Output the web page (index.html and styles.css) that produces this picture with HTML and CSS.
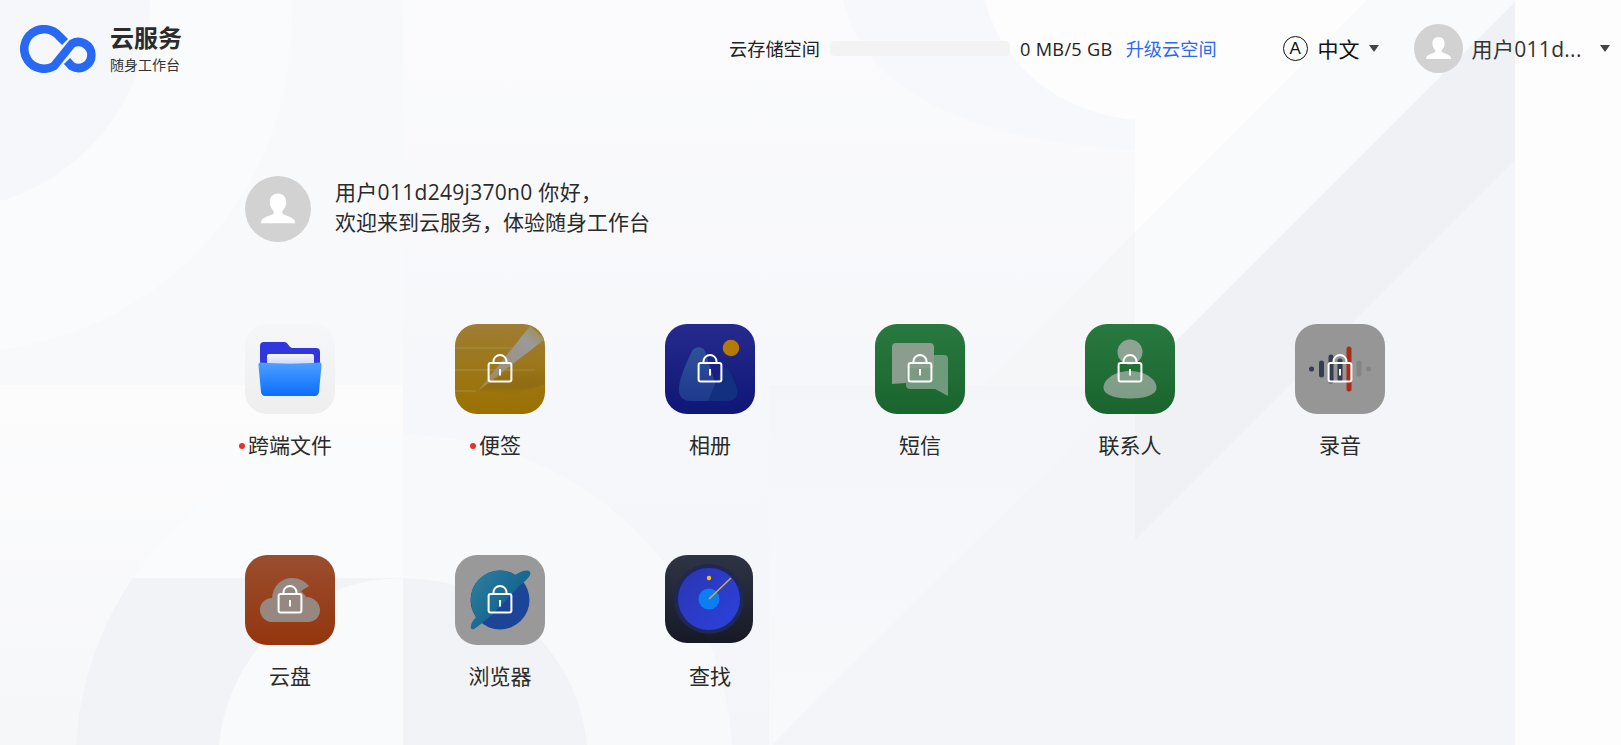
FILE: index.html
```html
<!DOCTYPE html>
<html lang="zh-CN">
<head>
<meta charset="utf-8">
<title>云服务</title>
<link rel="stylesheet" href="styles.css">
</head>
<body>
<svg class="decor" width="1621" height="745" viewBox="0 0 1621 745" aria-hidden="true">
  <defs>
    <clipPath id="col1"><rect width="403" height="745"/></clipPath>
    <clipPath id="col2"><rect x="403" width="732" height="745"/></clipPath>
    <clipPath id="col4"><rect x="1135" width="380" height="745"/></clipPath>
    <clipPath id="lowBox"><rect x="769" y="386" width="746" height="359"/></clipPath>
    <clipPath id="bigRound"><circle cx="404" cy="763.500" r="328.500"/></clipPath>
    <linearGradient id="leftLow" x1="0" y1="0" x2="0" y2="1"><stop offset="0" stop-color="#fcfcfd"/><stop offset="1" stop-color="#f6f7f9"/></linearGradient>
    <linearGradient id="midBase" x1="0" y1="0" x2="0" y2="1"><stop offset="0" stop-color="#fbfbfd"/><stop offset=".55" stop-color="#f6f7fa"/><stop offset="1" stop-color="#f3f5f8"/></linearGradient>
    <linearGradient id="lowTri" x1="0" y1="0" x2="0" y2="1"><stop offset="0" stop-color="#f3f5f8"/><stop offset=".4" stop-color="#f6f7fa"/><stop offset="1" stop-color="#f8f9fb"/></linearGradient>
  </defs>
  <rect width="1621" height="745" fill="#fdfdfd"/>
  <g clip-path="url(#col1)">
    <rect width="403" height="745" fill="#f8f9fb"/>
    <circle cx="-40" cy="20" r="332" fill="#fafbfc"/>
    <circle cx="-60" cy="0" r="210" fill="#f6f7fa"/>
    <rect y="385" width="403" height="360" fill="url(#leftLow)"/>
    <circle cx="404" cy="763.500" r="328.500" fill="#fafbfc"/>
    <rect y="578" width="403" height="167" fill="#f1f3f6" clip-path="url(#bigRound)"/>
    <circle cx="403" cy="763" r="185" fill="#f9fafb"/>
  </g>
  <g clip-path="url(#col2)">
    <rect x="403" width="732" height="745" fill="url(#midBase)"/>
    <path d="M843 0C860 80 950 140 1135 150V0z" fill="#f7f8fb"/>
    <path d="M985 0C1000 60 1050 110 1135 120V0z" fill="#fdfdfe"/>
    <polygon points="1135,232 1135,386 981,386" fill="#f5f6f8"/>
    <circle cx="404" cy="763.500" r="328.500" fill="#f8f9fb"/>
    <circle cx="403" cy="763" r="185" fill="#f1f3f6"/>
  </g>
  <g clip-path="url(#col4)">
    <rect x="1135" width="380" height="745" fill="#fdfdfd"/>
    <polygon points="1367,0 1515,0 1515,745 622,745" fill="#f9fafb"/>
    <polygon points="1517,0 1515,0 1515,745 772,745" fill="#eff1f4"/>
    <polygon points="1515,160 1515,745 930,745" fill="#f4f5f8"/>
  </g>
  <g clip-path="url(#lowBox)">
    <rect x="769" y="386" width="366" height="359" fill="url(#lowTri)"/>
    <polygon points="1131,386 1135,386 1135,745 772,745" fill="#f3f5f8"/>
  </g>
</svg>

<svg class="defs" width="0" height="0" aria-hidden="true">
  <symbol id="lock" viewBox="0 0 28 32">
    <path d="M7.500 11V9.500a6.500 6.500 0 0 1 13 0V11" fill="none" stroke="#fff" stroke-width="2"/>
    <rect x="2.600" y="11" width="22.800" height="18.500" rx="2" fill="none" stroke="#fff" stroke-width="2"/>
    <rect x="13" y="17" width="2" height="6.500" fill="#fff"/>
  </symbol>
  <symbol id="person" viewBox="0 0 64 64">
    <path d="M32 17c-5.200 0-8 3.800-8 8.500 0 3.500 1.500 6.500 3.800 8.400v2.600c-3.500 1.800-8.800 3-11 5.500-.9 1-1.300 2.300-1.300 3.800h33c0-1.500-.4-2.800-1.300-3.800-2.200-2.500-7.500-3.700-11-5.500v-2.600c2.300-1.900 3.800-4.900 3.800-8.400 0-4.700-2.800-8.500-8-8.500z" fill="#fff"/>
  </symbol>
</svg>

<header class="topbar">
  <div class="brand">
    <svg class="brand-logo" width="76" height="48" viewBox="20 25 76 48">
      <path d="M65 42L59 36A19.800 19.800 0 1 0 53.900 66.100L72 43.700A13 13 0 1 1 72 66.300L67 61" fill="none" stroke="#2768f5" stroke-width="8.500"/>
    </svg>
    <div class="brand-text">
      <div class="brand-name">云服务</div>
      <div class="brand-sub">随身工作台</div>
    </div>
  </div>
  <div class="storage">
    <span>云存储空间</span>
    <div class="storage-bar"></div>
    <span class="storage-num">0 MB/5 GB</span>
    <a class="storage-up">升级云空间</a>
  </div>
  <div class="lang">
    <span class="lang-a">A</span>
    <span class="lang-name">中文</span>
    <span class="caret"></span>
  </div>
  <div class="account">
    <div class="avatar avatar-small"><svg width="49" height="49"><use href="#person"/></svg></div>
    <span class="account-name">用户011d...</span>
    <span class="caret caret-account"></span>
  </div>
</header>

<main class="main">
  <section class="greeting">
    <div class="avatar avatar-big"><svg width="66" height="66"><use href="#person"/></svg></div>
    <p class="greeting-text"><span class="greeting-name">用户011d249j370n0 你好，</span><br>欢迎来到云服务，体验随身工作台</p>
  </section>

  <section class="apps">
    <div class="app">
      <div class="app-icon">
        <svg width="90" height="90" viewBox="0 0 90 90">
          <defs>
            <linearGradient id="fBg" x1="0" y1="0" x2="0" y2="1"><stop offset="0" stop-color="#f6f7f9"/><stop offset="1" stop-color="#eeeeee"/></linearGradient>
            <linearGradient id="fFront" x1="0" y1="0" x2="0" y2="1"><stop offset="0" stop-color="#4f9fff"/><stop offset="1" stop-color="#0b6dfd"/></linearGradient>
            <linearGradient id="fPaper" x1="0" y1="0" x2="0" y2="1"><stop offset="0" stop-color="#f4f6fd"/><stop offset="1" stop-color="#c9d4f7"/></linearGradient>
          </defs>
          <rect width="90" height="90" rx="22" fill="url(#fBg)"/>
          <path d="M15 42V22a4 4 0 0 1 4-4h20c5 0 4 6 9 6h23a4 4 0 0 1 4 4v14z" fill="#2f37dd"/>
          <rect x="22" y="30" width="47" height="12" rx="2" fill="url(#fPaper)"/>
          <path d="M13.500 41c-.3-1.500.8-2.700 2-2.500 19 1.500 40 1.500 59 0 1.200-.2 2.300 1 2 2.500l-2.500 27c-.2 2.300-1.800 4-4 4H20c-2.200 0-3.800-1.700-4-4z" fill="url(#fFront)"/>
        </svg>
      </div>
      <div class="app-label has-dot">跨端文件</div>
    </div>

    <div class="app">
      <div class="app-icon">
        <svg width="90" height="90" viewBox="0 0 90 90">
          <defs>
            <clipPath id="nClip"><rect width="90" height="90" rx="22"/></clipPath>
            <linearGradient id="nBg" x1="0" y1="0" x2="0" y2="1"><stop offset="0" stop-color="#9f7d33"/><stop offset="1" stop-color="#9a7100"/></linearGradient>
            <linearGradient id="nPen" x1="23" y1="67" x2="82" y2="8" gradientUnits="userSpaceOnUse"><stop offset="0" stop-color="#a08a4a"/><stop offset=".45" stop-color="#9a9284"/><stop offset=".85" stop-color="#9a9a9a"/><stop offset="1" stop-color="#a0915f"/></linearGradient>
            <linearGradient id="nShade" x1="0" y1="40" x2="0" y2="72" gradientUnits="userSpaceOnUse"><stop offset="0" stop-color="#7f6215" stop-opacity="0"/><stop offset=".7" stop-color="#7f6215" stop-opacity=".45"/><stop offset="1" stop-color="#9a7100" stop-opacity="0"/></linearGradient>
          </defs>
          <g clip-path="url(#nClip)">
            <rect width="90" height="90" fill="url(#nBg)"/>
            <path d="M0 24H60M0 46H80M0 67H21" stroke="#ad9858" stroke-width="1" opacity=".75"/>
            <path d="M23 67L90 22V60L60 70z" fill="url(#nShade)"/>
            <path d="M23 67L75 2L90 15z" fill="url(#nPen)"/>
          </g>
        </svg>
        <svg class="lock" width="28" height="32"><use href="#lock"/></svg>
      </div>
      <div class="app-label has-dot">便签</div>
    </div>

    <div class="app">
      <div class="app-icon">
        <svg width="90" height="90" viewBox="0 0 90 90">
          <defs>
            <linearGradient id="pBg" x1="0" y1="0" x2="0" y2="1"><stop offset="0" stop-color="#262a8e"/><stop offset="1" stop-color="#0e1676"/></linearGradient>
            <linearGradient id="pM1" x1="0" y1="0" x2="0" y2="1"><stop offset="0" stop-color="#30509b"/><stop offset="1" stop-color="#1d3a8c"/></linearGradient>
          </defs>
          <rect width="90" height="90" rx="22" fill="url(#pBg)"/>
          <path d="M27 27c3-5 10-5 13 0L56 77H26c-9 0-13-6-12-14 1-11 8-25 13-36z" fill="url(#pM1)"/>
          <path d="M56 46c4-4 8-2 10 4l6 14c2 8-2 13-10 13H43z" fill="#12307f"/>
          <circle cx="66" cy="24" r="8.300" fill="#b57a05"/>
        </svg>
        <svg class="lock" width="28" height="32"><use href="#lock"/></svg>
      </div>
      <div class="app-label">相册</div>
    </div>

    <div class="app">
      <div class="app-icon">
        <svg width="90" height="90" viewBox="0 0 90 90">
          <defs>
            <linearGradient id="sBg" x1="0" y1="0" x2="0" y2="1"><stop offset="0" stop-color="#28793f"/><stop offset="1" stop-color="#1a642e"/></linearGradient>
          </defs>
          <rect width="90" height="90" rx="22" fill="url(#sBg)"/>
          <path d="M17 23a4 4 0 0 1 4-4h34a4 4 0 0 1 4 4v32a4 4 0 0 1-4 4H30L17 60z" fill="#8b9d8f"/>
          <path d="M59 31h10a4 4 0 0 1 4 4v37L60 65H35a4 4 0 0 1-4-4v-2h24a4 4 0 0 0 4-4z" fill="#6f9a7b"/>
          <path d="M31 59h24a4 4 0 0 0 4-4V44H31z" fill="#7a9a81"/>
        </svg>
        <svg class="lock" width="28" height="32"><use href="#lock"/></svg>
      </div>
      <div class="app-label">短信</div>
    </div>

    <div class="app">
      <div class="app-icon">
        <svg width="90" height="90" viewBox="0 0 90 90">
          <defs>
            <linearGradient id="cBg" x1="0" y1="0" x2="0" y2="1"><stop offset="0" stop-color="#28793f"/><stop offset="1" stop-color="#1a642e"/></linearGradient>
            <linearGradient id="cBody" x1="0" y1="0" x2="0" y2="1"><stop offset="0" stop-color="#86a08c"/><stop offset="1" stop-color="#7d9c85"/></linearGradient>
          </defs>
          <rect width="90" height="90" rx="22" fill="url(#cBg)"/>
          <circle cx="45" cy="28" r="12.500" fill="#8da492"/>
          <path d="M45 47c16 0 26.500 9 26.500 16.500C71.500 71 60 74.500 45 74.500S18.500 71 18.500 63.500C18.500 56 29 47 45 47z" fill="url(#cBody)"/>
        </svg>
        <svg class="lock" width="28" height="32"><use href="#lock"/></svg>
      </div>
      <div class="app-label">联系人</div>
    </div>

    <div class="app">
      <div class="app-icon">
        <svg width="90" height="90" viewBox="0 0 90 90">
          <rect width="90" height="90" rx="22" fill="#969696"/>
          <g stroke-linecap="round" stroke-width="5">
            <path d="M16.500 45h.1M26.500 39V51M36 33V57M45 37V55" stroke="#343c50"/>
            <path d="M54 25V65" stroke="#a82c1a"/>
            <path d="M64 39V50M73.500 45h.1" stroke="#858585"/>
          </g>
        </svg>
        <svg class="lock" width="28" height="32"><use href="#lock"/></svg>
      </div>
      <div class="app-label">录音</div>
    </div>

    <div class="app">
      <div class="app-icon">
        <svg width="90" height="90" viewBox="0 0 90 90">
          <defs>
            <linearGradient id="dBg" x1="0" y1="0" x2="0" y2="1"><stop offset="0" stop-color="#9a4e2e"/><stop offset="1" stop-color="#94350e"/></linearGradient>
          </defs>
          <rect width="90" height="90" rx="22" fill="url(#dBg)"/>
          <path d="M27 67C19 67 15 60 15 55C15 48 20 43 27 43C28 31 36 23 47 23C54 23 60 26 64 31C62 33 58 34 56 36C58 38 60 40 61 42C69 42 75 48 75 55C75 62 70 67 63 67z" fill="#968780"/>
        </svg>
        <svg class="lock" width="28" height="32"><use href="#lock"/></svg>
      </div>
      <div class="app-label">云盘</div>
    </div>

    <div class="app">
      <div class="app-icon">
        <svg width="90" height="90" viewBox="0 0 90 90">
          <defs>
            <linearGradient id="bBg" x1="15" y1="15" x2="60" y2="50" gradientUnits="userSpaceOnUse"><stop offset="0" stop-color="#30809e"/><stop offset="1" stop-color="#12638f"/></linearGradient>
          </defs>
          <rect width="90" height="90" rx="22" fill="#999999"/>
          <circle cx="45" cy="45" r="29.500" fill="#1c4598"/>
          <path d="M16 45C16 28 29 15.500 45 15.500C51 15.500 56 17 60 20C66 16 73 14 75 17C77 20 70 27 64 31C50 47 32 66 19 74C14 76 15 68 21 62C18 57 16 51 16 45z" fill="url(#bBg)"/>
        </svg>
        <svg class="lock" width="28" height="32"><use href="#lock"/></svg>
      </div>
      <div class="app-label">浏览器</div>
    </div>

    <div class="app">
      <div class="app-icon">
        <svg width="90" height="90" viewBox="0 0 90 90">
          <defs>
            <linearGradient id="rBg" x1="0" y1="0" x2="0" y2="1"><stop offset="0" stop-color="#2f3445"/><stop offset="1" stop-color="#161925"/></linearGradient>
            <linearGradient id="rDial" x1="0" y1="0" x2="1" y2="1"><stop offset="0" stop-color="#2a35b0"/><stop offset="1" stop-color="#2c42df"/></linearGradient>
          </defs>
          <rect width="88" height="88" rx="22" fill="url(#rBg)"/>
          <circle cx="44" cy="44" r="35" fill="#1e2858"/>
          <circle cx="44" cy="44" r="31" fill="url(#rDial)"/>
          <circle cx="44" cy="44" r="10.500" fill="#0a7ef5"/>
          <circle cx="44" cy="23" r="2.200" fill="#f8c400"/>
          <path d="M44 44L66 23" stroke="#c9b345" stroke-width="1.600"/>
        </svg>
      </div>
      <div class="app-label">查找</div>
    </div>
  </section>
</main>
</body>
</html>
```
FILE: styles.css
```css
* { box-sizing: border-box; }
html, body { margin: 0; padding: 0; }
body {
  position: relative;
  width: 1621px;
  height: 745px;
  overflow: hidden;
  background: #fbfbfd;
  color: #222;
  font-family: "Open Sans", "Noto Sans CJK SC", sans-serif;
}
.decor { position: absolute; left: 0; top: 0; z-index: -1; }
.defs { position: absolute; }

.topbar {
  display: flex;
  align-items: center;
  height: 97px;
  padding: 0 9px 0 20px;
}
.brand { display: flex; align-items: center; gap: 14px; }
.brand-logo { display: block; }
.brand-text { display: flex; flex-direction: column; margin-top: 1px; }
.brand-name { font-size: 24px; line-height: 30px; font-weight: 700; color: #2b2b2b; }
.brand-sub { font-size: 14px; line-height: 20px; margin-top: 2px; color: #333; }

.storage {
  display: flex;
  align-items: center;
  margin-left: 547px;
  font-size: 18.2px;
  line-height: 26px;
}
.storage-bar {
  width: 180px;
  height: 15px;
  margin: 0 10px 0 10px;
  border-radius: 5px;
  background: #f3f3f3;
}
.storage-num { letter-spacing: .3px; }
.storage-up { margin-left: 13px; color: #2d68f5; }

.lang { display: flex; align-items: center; margin-left: 66px; }
.lang-a {
  display: flex;
  align-items: center;
  justify-content: center;
  width: 25px;
  height: 25px;
  border: 1.5px solid #111;
  border-radius: 50%;
  font-size: 17px;
  font-family: "Liberation Sans", sans-serif;
  color: #111;
}
.lang-name { margin-left: 10px; font-size: 21px; line-height: 28px; color: #111; }
.caret {
  width: 0;
  height: 0;
  margin-left: 9px;
  border-left: 5.5px solid transparent;
  border-right: 5.5px solid transparent;
  border-top: 7px solid #444;
}
.account { display: flex; align-items: center; margin-left: 35px; }
.avatar { border-radius: 50%; background: #d2d2d2; flex: none; }
.avatar svg { display: block; }
.avatar-small { width: 49px; height: 49px; }
.avatar-big { width: 66px; height: 66px; }
.account-name {
  width: 110px;
  margin-left: 9px;
  font-size: 21px;
  line-height: 28px;
  white-space: nowrap;
  letter-spacing: .3px;
  color: #333;
}
.caret-account { margin-left: 18px; }

.main { padding-left: 245px; }
.greeting { display: flex; align-items: center; gap: 24px; margin-top: 79px; }
.greeting-text { margin: 0 0 4px; font-size: 21px; line-height: 30px; color: #2a2a2a; }
.greeting-name { letter-spacing: .3px; }

.apps {
  display: grid;
  grid-template-columns: repeat(6, 90px);
  column-gap: 120px;
  row-gap: 95px;
  margin-top: 82px;
}
.app { display: flex; flex-direction: column; align-items: center; }
.app-icon {
  position: relative;
  width: 90px;
  height: 90px;
  flex: none;
}
.app-icon > svg { display: block; }
.app-icon > .lock { position: absolute; left: 31px; top: 28px; }
.app-label {
  position: relative;
  margin-top: 16px;
  font-size: 21px;
  line-height: 30px;
  white-space: nowrap;
  color: #2a2a2a;
}
.has-dot::before {
  content: "";
  position: absolute;
  left: -9px;
  top: 13px;
  width: 6px;
  height: 6px;
  border-radius: 50%;
  background: #e5322d;
}
```
